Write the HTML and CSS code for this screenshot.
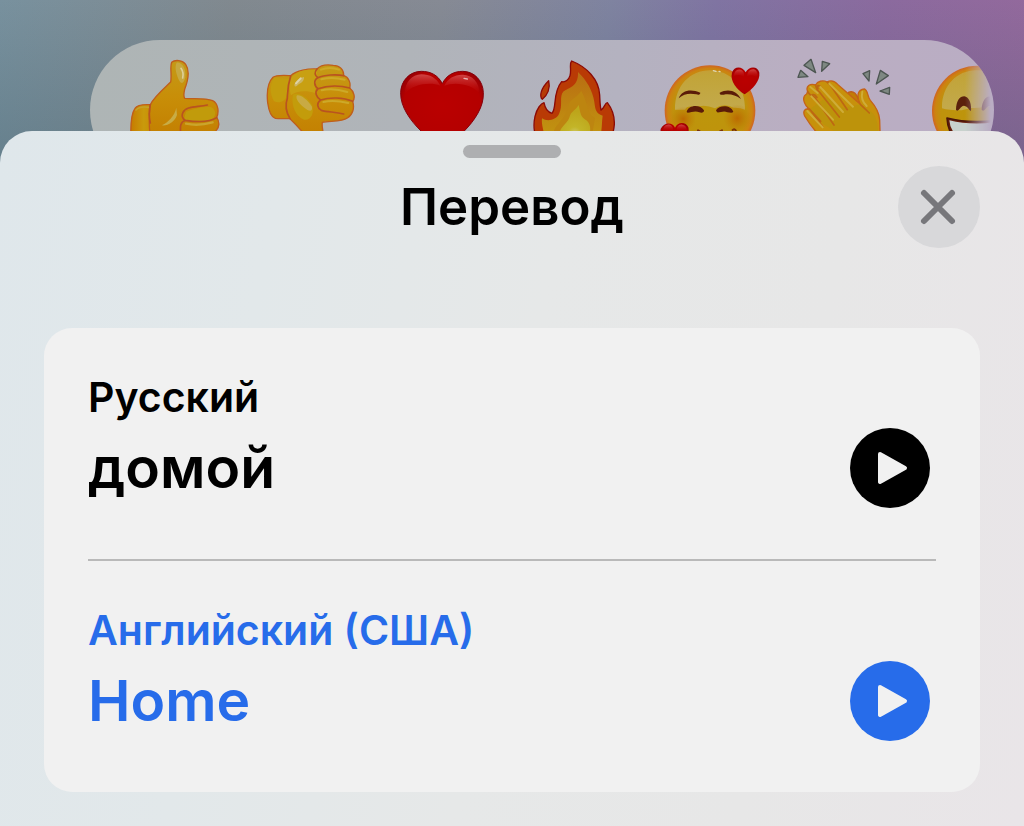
FILE: index.html
```html
<!DOCTYPE html>
<html lang="ru">
<head>
<meta charset="utf-8">
<meta name="viewport" content="width=device-width, initial-scale=1">
<title>Перевод</title>
<link rel="stylesheet" href="styles.css">
</head>
<body>
<svg class="defs" aria-hidden="true">
  <defs>
    <linearGradient id="skin" x1="0" y1="0" x2="0" y2="1"><stop offset="0" stop-color="#c49a17"/><stop offset=".45" stop-color="#c88e08"/><stop offset="1" stop-color="#c27d00"/></linearGradient>
    <linearGradient id="skin-side" x1="0" y1="0" x2="1" y2="0"><stop offset="0" stop-color="#c67b00"/><stop offset=".5" stop-color="#c99a0c"/><stop offset="1" stop-color="#c98700"/></linearGradient>
    <radialGradient id="red" cx=".5" cy=".45" r=".62"><stop offset="0" stop-color="#ba0000"/><stop offset=".75" stop-color="#b40000"/><stop offset="1" stop-color="#830008"/></radialGradient>
    <linearGradient id="gloss" x1="0" y1="0" x2="0" y2="1"><stop offset="0" stop-color="#d45050" stop-opacity=".85"/><stop offset="1" stop-color="#c01010" stop-opacity="0"/></linearGradient>
    <radialGradient id="face" cx=".5" cy=".5" r=".5"><stop offset="0" stop-color="#bd960c"/><stop offset=".8" stop-color="#bf920c"/><stop offset=".93" stop-color="#cc8310"/><stop offset="1" stop-color="#cf6423"/></radialGradient>
    <linearGradient id="shine" x1="0" y1="0" x2="0" y2="1"><stop offset="0" stop-color="#c3ae50" stop-opacity=".6"/><stop offset="1" stop-color="#c3a94c"/></linearGradient>
    <radialGradient id="blush"><stop offset="0" stop-color="#bb6500" stop-opacity=".9"/><stop offset="1" stop-color="#bb7800" stop-opacity="0"/></radialGradient>
    <linearGradient id="flame" x1="0" y1="0" x2="0" y2="1"><stop offset="0" stop-color="#b96d12"/><stop offset="1" stop-color="#c19410"/></linearGradient>
    <radialGradient id="core" cx=".5" cy=".9" r=".7"><stop offset="0" stop-color="#cfc868"/><stop offset=".3" stop-color="#c3b528"/><stop offset="1" stop-color="#bda51a"/></radialGradient>
    <linearGradient id="fade" gradientUnits="userSpaceOnUse" x1="315" y1="0" x2="392" y2="0"><stop offset="0" stop-color="#fff"/><stop offset="1" stop-color="#000"/></linearGradient>
    <mask id="edge" maskUnits="userSpaceOnUse" x="189" y="150" width="300" height="270"><rect x="189" y="150" width="300" height="270" fill="url(#fade)"/></mask>
  </defs>
</svg>
<div class="scene">
  <div class="reactions">
    <div class="pill">
      <button class="reaction" type="button" aria-label="Большой палец вверх">
        <svg viewBox="135 60 300 270" stroke-linejoin="round" stroke-linecap="round">
          <path d="M210 224C190 223 172 224 165 235C153 252 151 285 153 330H230Z" fill="url(#skin-side)" stroke="#bf5e1c" stroke-width="4"/>
          <path d="M211 224C222 200 256 172 272 156C276 135 269 108 275 97C285 88 308 90 317 103C330 122 324 152 314 178C311 190 311 200 314 205C345 207 378 204 398 212C416 221 417 248 410 262C419 275 419 292 408 302L400 335H215C205 300 207 260 211 224Z" fill="url(#skin)" stroke="#bf5e1c" stroke-width="4"/>
          <path d="M290 98C306 96 319 116 316 142C312 160 305 163 299 154C288 135 283 108 290 98Z" fill="#c6a840"/>
          <path d="M303 115Q312 128 308 144" fill="none" stroke="#ddcf96" stroke-width="5"/>
          <path d="M289 233C284 258 263 278 245 286C262 289 285 275 291 255Z" fill="#c8ac45"/>
          <path d="M318 245C338 236 365 229 393 231C410 239 410 262 391 270C360 275 325 276 312 268Z" fill="#c19b0b"/>
          <path d="M382 225C350 232 318 228 309 247C304 257 307 267 316 271C350 276 386 279 410 263M316 271C301 277 300 288 302 310M211 224C206 245 207 264 211 279" fill="none" stroke="#b95320" stroke-width="5"/>
          <path d="M318 281Q355 289 398 277" fill="none" stroke="#caa52b" stroke-width="7"/>
          <path d="M168 240Q180 228 205 232" fill="none" stroke="#c5a02a" stroke-width="5"/>
        </svg>
      </button>
      <button class="reaction" type="button" aria-label="Большой палец вниз">
        <svg viewBox="534 60 300 270" stroke-linejoin="round" stroke-linecap="round">
          <path d="M632 137C612 136 589 134 579 142C563 158 560 190 563 218C566 240 574 262 586 265C603 267 620 265 630 266C648 283 668 305 690 335H735C731 311 724 293 727 277C748 272 785 276 802 264C819 254 824 233 818 214C827 203 822 184 809 174C813 159 806 141 791 137C792 118 778 106 760 106C739 103 720 107 711 117C684 115 650 122 632 137Z" fill="url(#skin)" stroke="#bf5e1c" stroke-width="4"/>
          <path d="M583 143C568 165 569 191 582 214C599 222 617 213 621 195L628 146Z" fill="#c49d0d"/>
          <path d="M712 119C680 118 652 122 635 142C626 164 629 184 633 196C650 181 681 182 705 189Z" fill="#c8a012"/>
          <path d="M638 196C634 225 645 260 672 269C693 272 704 249 696 225C683 202 653 182 638 196Z" fill="#c39c0b"/>
          <path d="M650 197C659 192 681 207 696 230C698 248 685 243 674 234C659 222 646 207 650 197Z" fill="#c8aa43"/>
          <path d="M643 164Q649 146 672 141Q674 154 656 163Q644 176 643 164Z" fill="#cbb463"/><path d="M648 160L662 145" stroke="#ddd2a5" stroke-width="6"/>
          <path d="M632 138C622 168 623 185 622 205C615 225 619 248 630 266M711 117C702 128 704 137 714 143C732 135 768 132 791 137M714 143C699 150 703 169 714 176C743 166 781 166 809 174M714 176C703 186 708 202 722 210C750 201 790 202 818 214M722 210C708 220 712 234 724 241C743 247 765 245 791 252" fill="none" stroke="#b95320" stroke-width="5"/>
          <g fill="none" stroke="#cda928" stroke-width="6"><path d="M723 119Q749 109 777 119M724 148Q756 140 794 149M725 181Q760 173 802 186M730 216Q760 208 805 219"/></g>
        </svg>
      </button>
      <button class="reaction" type="button" aria-label="Сердце">
        <svg viewBox="63 60 300 270">
          <path d="M217 161C204 135 181 124 154 124C119 124 93 152 92 188C91 230 120 271 154 304C177 327 202 344 217 351C232 344 257 327 282 304C315 270 342 230 340 188C339 152 313 124 278 124C251 124 229 136 217 161Z" fill="url(#red)" stroke="#85000b" stroke-width="3"/>
          <path d="M105 191C104 156 126 134 154 133C179 133 200 144 211 167C183 155 127 161 105 191Z" fill="url(#gloss)"/>
          <path d="M223 167C233 145 255 133 279 134C306 135 329 156 328 191C310 162 254 154 223 167Z" fill="url(#gloss)"/>
          <path d="M282 145L292 147" stroke="#e7b1b1" stroke-width="4" stroke-linecap="round"/>
        </svg>
      </button>
      <button class="reaction" type="button" aria-label="Огонь">
        <svg viewBox="462 60 300 270" stroke-linejoin="round">
          <path d="M605 93C649 110 687 148 689 195C690 214 690 227 693 240C702 237 704 219 712 218C726 236 734 260 733 283C731 306 727 322 715 345H508C493 318 489 286 495 259C501 235 513 220 522 218C525 235 533 247 546 250C561 235 547 188 575 155C588 158 597 147 600 137C605 120 597 101 605 93Z" fill="#b93a05" stroke="#8b0a06" stroke-width="4"/>
          <path d="M536 152C542 175 532 196 517 208C507 199 513 174 536 152Z" fill="#b63a05" stroke="#8b0a06" stroke-width="4"/>
          <path d="M624 126C650 151 668 182 673 216C676 240 678 251 698 257C695 279 697 288 692 315H523C519 296 514 281 516 265C532 276 558 270 567 252C580 224 566 200 581 184C597 172 626 169 624 126Z" fill="url(#flame)"/>
          <path d="M634 182C657 225 649 252 675 263L667 310H550C553 282 592 263 595 227C600 205 620 205 634 182Z" fill="#bd8510"/>
          <path d="M626 225C632 250 630 260 651 272C664 286 661 300 658 320H568C565 290 594 283 600 257C605 243 617 241 626 225Z" fill="url(#core)"/>
        </svg>
      </button>
      <button class="reaction" type="button" aria-label="Влюблённое лицо">
        <svg viewBox="51 60 300 270" stroke-linecap="round">
          <circle cx="210" cy="242" r="136" fill="url(#face)"/>
          <path d="M105 239C104 166 151 121 210 121C270 121 317 169 315 239Q300 232 281 233Q252 217 225 235Q193 221 165 232Q141 225 135 239Z" fill="url(#shine)"/>
          <circle cx="130" cy="267" r="38" fill="url(#blush)"/><circle cx="292" cy="265" r="42" fill="url(#blush)"/>
          <path d="M116 205C125 181 152 175 181 188C180 195 175 195 169 193C146 189 132 192 116 205ZM239 188C264 174 292 182 303 207C285 195 271 191 251 194C243 195 239 194 239 188Z" fill="#5a1c08"/>
          <path d="M140 246C144 224 181 222 192 241C193 248 185 249 178 247C165 241 154 248 143 248ZM228 241C238 223 275 225 280 246C275 250 269 247 262 247C251 240 240 249 231 247Z" fill="#5b1b08"/>
          <path d="M174 301Q207 325 246 301M278 300Q285 295 288 303" fill="none" stroke="#7b3208" stroke-width="6"/>
          <path d="M220 122L228 124M237 124L240 125" stroke="#ded7b5" stroke-width="4"/>
          <path d="M317 127C307 107 282 108 276 128C269 153 291 179 314 193C338 177 361 153 358 128C354 108 327 107 317 127Z" fill="url(#red)"/>
          <path d="M281 139Q284 114 303 119Q314 124 312 140Q296 131 281 139ZM321 139Q323 116 342 118Q357 125 351 142Q336 131 321 139Z" fill="url(#gloss)"/>
          <path d="M105 293C97 274 70 277 62 297C58 320 79 343 105 354C130 342 151 319 145 292C138 274 112 275 105 293Z" fill="url(#red)"/>
          <path d="M69 303Q71 281 90 284Q101 289 99 303ZM109 303Q111 282 127 284Q142 287 139 303Z" fill="url(#gloss)"/>
        </svg>
      </button>
      <button class="reaction" type="button" aria-label="Аплодисменты">
        <svg viewBox="450 60 300 270" stroke-linejoin="round" stroke-linecap="round">
          <g fill="#7e8882" stroke="#4d5652" stroke-width="4"><path d="M513 88L492 106L527 128ZM547 94L569 101L545 124ZM482 121L474 142L504 140ZM689 122L669 131L687 153ZM721 121L745 137L709 162ZM749 172L720 183L748 193Z"/></g>
          <path d="M625 187C642 180 651 194 656 210L681 270L640 275Z" fill="#c27c06" stroke="#bf5e1c" stroke-width="4"/>
          <path d="M503 184C496 169 510 159 527 165C532 154 548 149 561 156C574 149 586 155 594 164L661 223C648 197 654 178 673 177C685 181 681 199 691 211C707 229 718 248 719 270L721 335H558C535 315 509 283 494 258C487 242 496 234 509 238C491 224 484 200 500 192Z" fill="#c7910b" stroke="#c56318" stroke-width="4"/>
          <path d="M509 238L549 282L594 310L714 310C714 272 706 253 690 242L662 223L610 234L559 202Z" fill="#bd930b"/>
          <path d="M527 165Q528 179 540 188L598 261M561 156Q569 162 577 174L622 239M503 184Q507 195 524 202L582 285M509 238Q520 252 548 290M534 176C529 162 539 166 547 176M518 204C510 194 522 188 531 202M509 238L542 274M661 223L688 249" fill="none" stroke="#bd6713" stroke-width="5"/>
          <path d="M541 171L609 246M568 161L639 230M514 199L579 269M502 243L548 292M511 171L533 189M667 185Q661 210 680 228" fill="none" stroke="#ceac38" stroke-width="6"/>
        </svg>
      </button>
      <button class="reaction" type="button" aria-label="Смеющееся лицо">
        <svg viewBox="189 150 300 270" stroke-linejoin="round">
          <g mask="url(#edge)">
            <circle cx="352" cy="333" r="136" fill="url(#face)"/>
            <path d="M246 325C244 262 287 211 349 211C410 211 454 262 454 325Q430 334 405 326L379 317Q361 326 333 324L305 331Q267 331 246 325Z" fill="url(#shine)"/>
            <path d="M288 329C289 302 299 289 313 289C327 291 335 310 333 333C326 330 325 319 312 317C301 318 298 332 291 332ZM365 329C366 302 378 289 391 289C405 291 413 310 411 333C404 330 401 319 390 317C379 318 376 332 369 332Z" fill="#5b210c"/>
            <path d="M261 354C315 368 384 369 439 354C435 410 402 440 350 440C299 440 264 410 261 354Z" fill="#671e0c" stroke="#4c1608" stroke-width="5"/>
            <path d="M268 361C320 374 380 374 432 361Q431 379 423 394H279Q269 379 268 361Z" fill="#c8d2cd"/>
          </g>
        </svg>
      </button>
    </div>
  </div>
  <main class="sheet">
    <div class="handle"></div>
    <header class="sheet-header">
      <h1 class="title">Перевод</h1>
      <button class="close" type="button" aria-label="Закрыть">
        <svg viewBox="0 0 82 82"><path d="M26 27L54 55M54 27L26 55" fill="none" stroke="#77777b" stroke-width="6" stroke-linecap="round"/></svg>
      </button>
    </header>
    <div class="card">
      <section class="entry">
        <h2 class="language">Русский</h2>
        <div class="line">
          <p class="word">домой</p>
          <button class="play" type="button" aria-label="Прослушать: Русский">
            <svg viewBox="0 0 80 80"><path d="M30 26L55 40L30 54Z"/></svg>
          </button>
        </div>
      </section>
      <section class="entry entry-target">
        <h2 class="language">Английский (США)</h2>
        <div class="line">
          <p class="word" lang="en">Home</p>
          <button class="play" type="button" aria-label="Прослушать: Английский">
            <svg viewBox="0 0 80 80"><path d="M30 26L55 40L30 54Z"/></svg>
          </button>
        </div>
      </section>
    </div>
  </main>
</div>
</body>
</html>
```

FILE: styles.css
```css
* { box-sizing: border-box; }
body { margin: 0; font-family: Inter, "Noto Sans", sans-serif; color: #000; }
h1, h2, p { margin: 0; font-weight: 600; }
button { padding: 0; border: 0; background: none; cursor: pointer; }
svg { display: block; }
.defs { position: absolute; width: 0; height: 0; }

.scene {
  display: flex;
  flex-direction: column;
  min-height: 100vh;
  background:
    linear-gradient(to bottom, rgba(50, 85, 100, 0), rgba(50, 85, 100, 0.3)) top / 100% 180px no-repeat,
    linear-gradient(100deg, #78919e 0%, #81898f 22%, #868a94 42%, #7f83a0 58%, #8074a2 68%, #8b6a9e 84%, #94699c 100%) top / 100% 180px no-repeat;
}
.reactions {
  height: 131px;
  padding: 40px 30px 0 90px;
  overflow: hidden;
}
.pill {
  display: flex;
  gap: 33px;
  height: 140px;
  padding: 10px 0 0 35px;
  border-radius: 70px;
  overflow: hidden;
  background: linear-gradient(95deg, #aeb5b5 0%, #b0b4b9 35%, #b4b2c0 58%, #baaec2 78%, #baadc4 100%);
}
.reaction { flex: none; width: 100px; height: 90px; }
.reaction svg { width: 100%; height: 100%; overflow: visible; }

.sheet {
  flex: 1;
  padding: 14px 44px 34px;
  border-radius: 32px 32px 0 0;
  background: linear-gradient(100deg, #dfe7eb 0%, #e2e8ea 25%, #e6e8e8 50%, #e7e7e7 75%, #e9e5e8 100%);
}
.handle {
  width: 98px;
  height: 13px;
  margin: 0 auto;
  border-radius: 7px;
  background: #aeafb1;
}
.sheet-header {
  display: grid;
  grid-template-columns: 82px 1fr 82px;
  align-items: center;
  margin: 8px 0 80px;
}
.title { grid-column: 2; text-align: center; font-size: 51px; line-height: 62px; }
.close { width: 82px; height: 82px; border-radius: 50%; background: #d8d8da; }

.card { padding: 0 44px; border-radius: 28px; background: #f1f1f1; }
.entry { padding: 44px 0 51px; }
.entry + .entry { border-top: 2px solid #b9b9b9; }
.entry-target { color: #276cea; }
.language { margin-bottom: 6px; font-size: 41px; line-height: 50px; }
.line { display: flex; align-items: center; justify-content: space-between; padding-right: 6px; }
.word { font-size: 57px; line-height: 74px; }
.play { flex: none; width: 80px; height: 80px; border-radius: 50%; background: #000; }
.entry-target .play { background: #276cea; }
.play path { fill: #f1f1f1; stroke: #f1f1f1; stroke-width: 4; stroke-linejoin: round; }
```
